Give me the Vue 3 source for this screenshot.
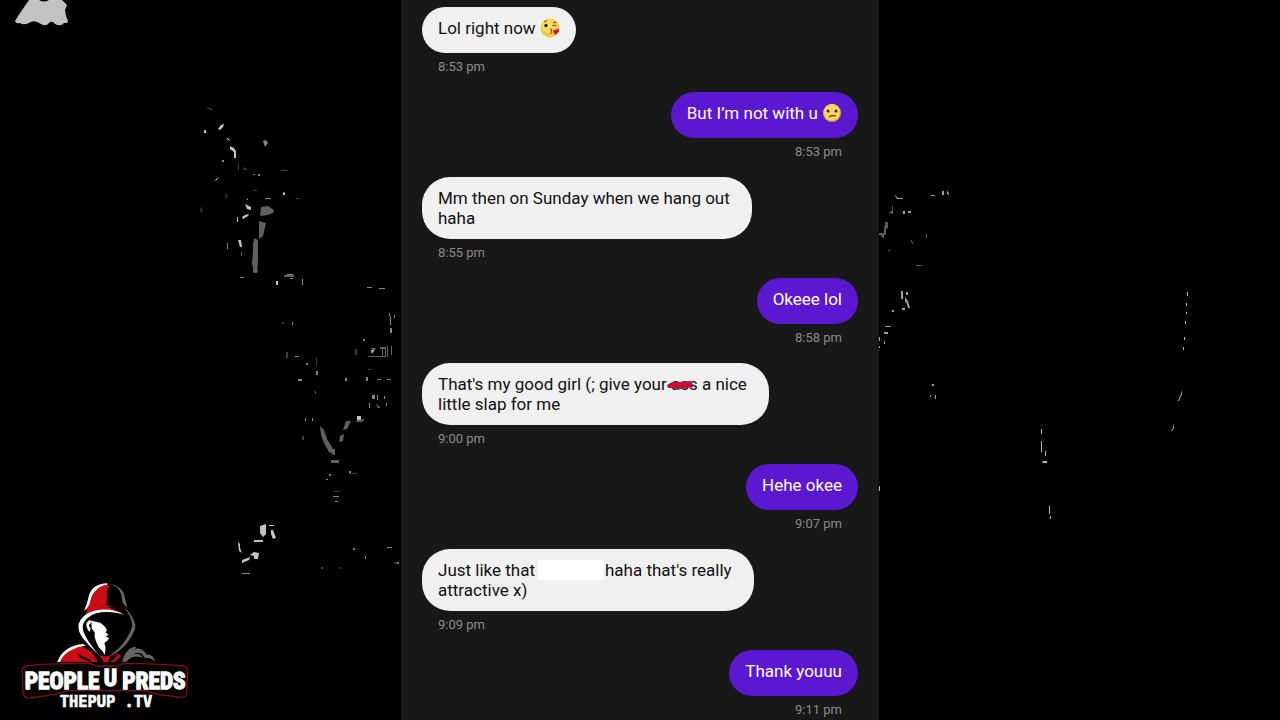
<script setup>
const messages = [
  { id: 1, side: 'in', time: '8:53 pm', lines: [[{ text: 'Lol right now ' }, { emoji: 'kiss' }]] },
  { id: 2, side: 'out', time: '8:53 pm', lines: [[{ text: 'But I’m not with u ' }, { emoji: 'unsure' }]] },
  { id: 3, side: 'in', time: '8:55 pm', lines: [[{ text: 'Mm then on Sunday when we hang out' }], [{ text: 'haha' }]] },
  { id: 4, side: 'out', time: '8:58 pm', lines: [[{ text: 'Okeee lol' }]] },
  {
    id: 5, side: 'in', time: '9:00 pm',
    lines: [[{ text: "That's my good girl (; give your " }, { struck: 'ass' }, { text: ' a nice' }], [{ text: 'little slap for me' }]],
  },
  { id: 6, side: 'out', time: '9:07 pm', lines: [[{ text: 'Hehe okee' }]] },
  {
    id: 7, side: 'in', time: '9:09 pm',
    lines: [[{ text: 'Just like that' }, { blank: true }, { text: "haha that's really" }], [{ text: 'attractive x)' }]],
  },
  { id: 8, side: 'out', time: '9:11 pm', lines: [[{ text: 'Thank youuu' }]] },
]

// Specks of the backdrop, grouped by tone.
const specks = [
  {
    tone: '#c4c4c4',
    d: 'M218 129l3-4 3-1-1 3-3 3zM226 137l3 2 1 2-2-1zM230 146l4 2 2 3v7h-2v-6l-4-3zM204 130h2v3h-2zM214 181l3-1 2-3M245 204l6 3v3l-4-1zM242 217l3-2 4-1-1 2-5 3zM237 217h1v5h-1zM238 240h3l1 7h-2zM283 192l2 1v2h-2zM276 281h2v4h-2zM260 526l6-2v10l-3 3-3-4zM269 525h5v1h-5zM271 530h2l3 8-3 1-2-5zM254 540h9v2h-9zM238 542l2 2v4l2 5-3-2zM250 555l4-3 5 1-1 6h-4v-3zM242 560l8-3-1 3-7 3zM357 416h4v4h-4zM371 350l4-1-3 5z',
  },
  {
    tone: '#606060',
    d: 'M261 207l7-1 6 4-1 3-5 2-8 1zM259 221l7 2-3 13-4 3zM254 238l4 2v20l-1 13h-3l-2-10zM253 243l3-2v20l2 11h-5zM320 426l4 4 3 9 5 8 3 8-6-3-5-9-3-8zM346 421h5l-4 8-4 1zM340 436l4-2-1 7-4 1zM331 460h8v3h-8zM357 420l8-1-3 3h-6zM371 348h5v1h-5zM380 347h6v9h-1v-7h-2v7h-1v-7h-2zM368 356h18v1h-18zM387 346h1v11h-1zM391 346h1v9h-1zM241 252h1v4h-1zM333 449h2v6h-2zM284 275h10v2h-10z',
  },
  {
    tone: '#858585',
    d: 'M246 200h2v-2M265 198h6v1h-6zM263 141l3-1 2 3-3 4M253 174h2v1h-2zM258 174h2v2h-2zM222 160h2v2h-2zM227 243v6h1v-6zM240 277h4v1h-4zM287 274h6v1h-6zM290 278h3v1h-3zM302 279v6h1v-6zM367 287h5v1h-5zM379 288h6v1h-6zM389 316h2v9h-2zM292 322h1v3h-1zM295 356h4v1h-4zM306 363h2v2h-2zM316 371h2v4h-2zM298 379h4v2h-4zM345 378h2v3h-2zM366 377h2v4h-2zM377 379h4v1h-4zM387 379h4v1h-4zM314 391l2 1v2zM372 395h3v4h-3zM377 395v5h1v-5zM384 396v3h1v-3zM369 403v5h1v-5zM376 403l4 5h-2zM386 403v3h1v-3zM305 418v3h1v-3zM312 418v3h1v-3zM329 474h2v2h-2zM349 471h2v3h-2zM326 479h2v1h-2zM333 496h6v1h-6zM335 501h3v1h-3zM242 573h8v1h-8zM387 547h5v1h-5zM393 563l6-1v2zM353 548h2v2h-2zM365 556h1v3h-1zM389 313v12h1v-12zM394 315v3h1v-3zM390 328h2v5h-2zM363 339h2v2h-2z',
  },
  {
    tone: '#3e3e3e',
    d: 'M205 107l8 4-2-3zM243 167l5 3h-4zM238 163h1v7h-1zM281 170h7v1h-7zM225 193l3 3-2 3zM200 207l3 3-2 3zM253 190h4v1h-4zM296 198h4v1h-4zM282 322h2v2h-2zM286 352h2v6h-2zM316 358h1v7h-1zM302 436h2v4h-2zM355 349h2v6h-2zM349 473h8v1h-8zM334 491h6v1h-6zM368 369h4v1h-4zM321 567h2v2h-2zM339 567l4 1-3 1z',
  },
  {
    tone: '#a0a0a0',
    d: 'M894 194l4 4h5v1h-6zM903 211h2v3h-2zM908 211h3v2h-3zM942 191h2v4h-2zM947 190l2 4v1l-2-1zM931 195h4v1h-4zM901 291h2v8h-2zM906 292h2v3h-2zM905 297l3 4 2 7h-2l-2-7-1 3zM902 308h3v2h-3zM892 310h2v2h-2zM885 326h6v1h-6zM884 332h4v2h-4zM878 337h2v4h-2zM878 346h2v2h-2zM884 341v3h1v-3zM932 384h2v2h-2zM930 395h1v2h-1zM935 395v4h1v-4z',
  },
  {
    tone: '#5a5a5a',
    d: 'M889 213l3-3v-4h1v8zM885 222h3v6l-2 1v6h-7v-2h5v-7h1zM880 235h4v4zM911 239l3 6-3-3zM888 250h2v1h-2zM916 265h6v1h-6zM926 234h1v4h-1z',
  },
  {
    tone: '#b4b4b4',
    d: 'M1041 429v5h1v-5zM1041 441v11h1v-11zM1045 451v5h1v-5zM1042 461h5v2h-4zM1049 506v8h1v-8zM1050 516v3h1v-3zM1187 292v4h1v-4zM1186 303v3h1v-3zM1186 312v2h1v-2zM1185 321v3h1v-3zM1184 337v3h1v-3zM1183 347v3h1v-3zM1181 390v4l-3 7h1l3-7zM1173 423v5l-2 3h1l2-3zM879 486v5h1v-5z',
  },
]
</script>

<template>
  <div class="stage">
    <svg class="backdrop" viewBox="0 0 1280 720" preserveAspectRatio="xMidYMid slice" aria-hidden="true">
      <path class="patch" d="M29 0h10q5 3 10 0h13q3 3 5 5l-2 5 1 6 2 5-1 2-3 0q-3 4-9 1-3-4-6-1-3 4-8 1-6-4-10-2-7 4-11 1-4 1-5-2l5-8z" />
      <path v-for="group in specks" :key="group.tone" :d="group.d" :fill="group.tone" />
    </svg>

    <aside class="brand">
      <svg class="logo" viewBox="0 0 630 480" role="img" aria-label="People U Preds">
        <path fill="#c90d16" d="M320 57q-30 3-42 31-9 22-20 48 44-20 90-5-28-9-27-34 2-18 13-27-6-8-14-13z" />
        <path fill="#000" d="M328 64q-14 17-3 37l-9 18 46 15 6-30q-9-30-40-40z" />
        <path fill="#fff" d="M322 55q-46 1-56 40-4 20-14 43 12-10 17-21 3-22 14-36 14-19 39-22z" />
        <path fill="#666" d="M322 55q33 6 42 33l4 26 14 15q-2-14-6-24-5-45-54-50z" />
        <path fill="#c90d16" d="M263 132q37-19 82 3l23 10q-50-10-90 2l-27 18z" />
        <path fill="#fff" d="M374 151q-37-25-91-14-37 10-47 40-4 20 12 42 20 25 48 50-30-35-43-63-10-22 0-36 18-24 50-28 38-4 71 9z" />
        <path fill="#666" d="M371 126q22 17 31 42 6 10 3 23-12 34-37 57-17 17-38 23 35-24 50-51 12-18 17-36-1-29-26-58z" />
        <path fill="#fff" d="M267 166q-11 9-7 19 2 11 9 15l3-10q-6-4-5-10l8-9q-4 20 9 31-2 13 4 27l7 16q13 12 19 24 4-12 2-26-5-10 1-12 9-4 10-12l-10-5 9-4-9-8 4-8-8-11-12-10-23-5z" />
        <path fill="#c90d16" d="M178 290q12-27 42-41l25-5 31 18 24 11 20 1 34-7q10 2 8 7l-18 17z" />
        <path fill="#000" d="M232 266l34 16 10 10-34-12zM276 262l26 14 10 16h-18zM330 274l24-4-18 18-12 4z" />
        <path fill="#fff" d="M172 291q8-24 30-39 22-14 47-15l9 5q-24 2-42 12-28 13-36 37z" />
        <path fill="#666" d="M366 290q8-27 25-40 9-5 18-4l-5 8 9-4q20 5 26 18 23 1 26 23-10-14-30-12l-10-13q-12-6-26 2l17-1q9 5 13 12-16-8-32-2-13 5-18 13z" />
        <path class="plate" d="M77 303q67-9 192-8l19 8h62l20-8q96 0 180 8 14 3 13 16l-3 67q-3 12-16 11l-73-9-34-11H205l-40 11-73 11q-19 2-23-14l-2-65q-1-14 10-17z" />
        <text class="title" x="186" y="372" text-anchor="middle">PEOPLE</text>
        <text class="title" x="331" y="362" text-anchor="middle">U</text>
        <text class="title" x="462" y="372" text-anchor="middle">PREDS</text>
        <text class="site" x="318" y="425" text-anchor="middle">THEPUP .TV</text>
      </svg>
    </aside>

    <main class="chat">
      <article v-for="m in messages" :key="m.id" class="message" :class="m.side">
        <div class="bubble" :class="{ multi: m.lines.length > 1 }">
          <p v-for="(line, i) in m.lines" :key="i" class="line">
            <template v-for="(part, j) in line" :key="j">
              <svg v-if="part.emoji === 'kiss'" class="emoji" viewBox="0 0 20 20" role="img" aria-label="Face blowing a kiss">
                <circle cx="10" cy="10" r="9.5" fill="#f6c83c" />
                <circle cx="9" cy="8" r="7" fill="#fbdc60" />
                <circle cx="6" cy="7.500" r="1.700" fill="#352014" />
                <path d="M12 8q2-2 4 0M4 4q2-2 3-1M13 5l3-1M10 11q3 0 1 2 2 1-1 3" fill="none" stroke="#75441c" stroke-width="1" />
                <path d="M15 17l-2-4q0-2 3-1 2-2 3-1 1 3-4 6z" fill="#d71938" />
              </svg>
              <svg v-else-if="part.emoji === 'unsure'" class="emoji" viewBox="0 0 20 20" role="img" aria-label="Confused face">
                <circle cx="10" cy="10" r="9" fill="#eab53c" />
                <circle cx="10" cy="9" r="8" fill="#fbd65c" />
                <circle cx="6" cy="8" r="1.500" fill="#352014" />
                <circle cx="14" cy="8" r="1.500" fill="#352014" />
                <path d="M7 14q3-2 7-1" fill="none" stroke="#5a3315" stroke-width="1.200" />
              </svg>
              <span v-else-if="part.struck" class="struck">{{ part.struck }}<svg class="brush" viewBox="0 0 28 8" aria-hidden="true"><path d="M0 4q5-4 11-3l13-1 1 2-2 1 4 1-1 2-12 2-9-1-4 0z" fill="#c20f3c" /></svg></span>
              <span v-else-if="part.blank" class="blank"></span>
              <span v-else>{{ part.text }}</span>
            </template>
          </p>
        </div>
        <time class="time">{{ m.time }}</time>
      </article>
    </main>
  </div>
</template>

<style>
body {
  margin: 0;
  background: #000;
}
</style>

<style scoped>
.stage {
  position: relative;
  display: grid;
  grid-template-columns: minmax(0, 1fr) minmax(0, 478px) minmax(0, 1fr);
  height: 100vh;
  overflow: hidden;
  background: #000;
  font-family: Roboto, "Liberation Sans", sans-serif;
}
.backdrop {
  position: absolute;
  inset: 0;
  width: 100%;
  height: 100%;
}
.patch {
  fill: #c2c2c2;
}
.brand {
  position: relative;
  align-self: end;
}
.logo {
  display: block;
  width: 210px;
  max-width: 100%;
}
.plate {
  fill: #080203;
  stroke: #7c0d19;
  stroke-width: 4;
}
.title {
  font: 700 70px "Liberation Sans Narrow", "Roboto Condensed", "DejaVu Sans Condensed", sans-serif;
  fill: #fff;
  stroke: #fff;
  stroke-width: 4;
}
.site {
  font: 700 46px "DejaVu Sans Mono", monospace;
  fill: #fff;
  stroke: #fff;
  stroke-width: 2;
}
.chat {
  position: relative;
  grid-column: 2;
  display: flex;
  flex-direction: column;
  gap: 17px;
  padding: 7px 21px;
  background: #181818;
}
.message {
  display: flex;
  flex-direction: column;
  align-items: flex-start;
  gap: 6px;
}
.out {
  align-items: flex-end;
}
.bubble {
  box-sizing: border-box;
  min-height: 46px;
  padding: 11px 16px;
  border-radius: 28px;
  background: #f0f0f0;
  color: #111;
  font-size: 17px;
  line-height: 20px;
}
.multi {
  padding-right: 22px;
}
.out .bubble {
  background: #5b18d0;
  color: #fff;
}
.line {
  margin: 0;
  white-space: pre;
}
.time {
  padding: 0 16px;
  color: #8a8a8a;
  font-size: 13px;
  line-height: 16px;
}
.emoji {
  width: 20px;
  height: 20px;
  vertical-align: top;
}
.struck {
  position: relative;
}
.brush {
  position: absolute;
  left: -4px;
  top: 7px;
  width: 28px;
  height: 8px;
}
.blank {
  display: inline-block;
  width: 66px;
  height: 20px;
  margin: 0 1px 0 3px;
  background: #fff;
  vertical-align: top;
}
</style>
